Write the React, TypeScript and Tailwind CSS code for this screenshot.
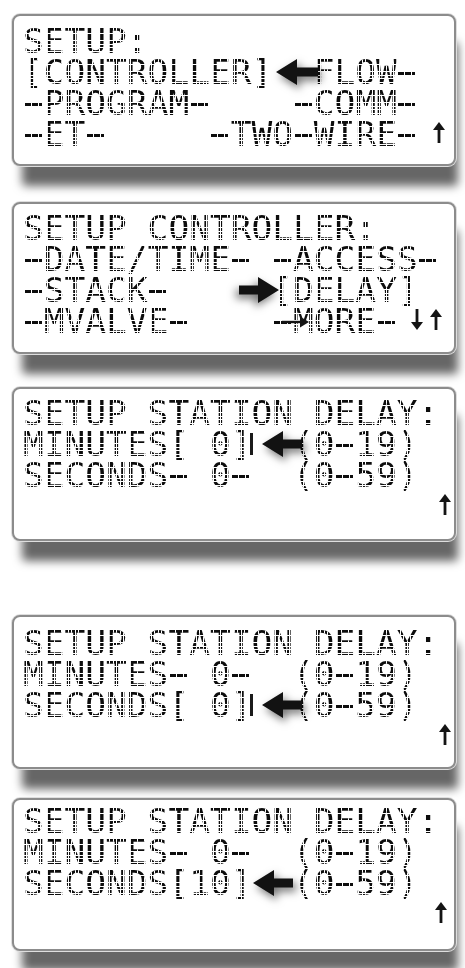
import React from "react";

type Tail = "up" | "down";

type Mark =
  | { kind: "left"; pos: string; w: number; cursor?: string }
  | { kind: "right"; pos: string; w: number }
  | { kind: "small"; pos: string };

type Line = { text: string; tail?: Tail[]; tailClass?: string; mark?: Mark };

type Screen = { box: string; lines: Line[] };

// LCD character look: dark glyphs broken up by a thin white dot grid
const dots =
  "whitespace-pre bg-[#0d0d0d] bg-[image:repeating-linear-gradient(90deg,#fff_0_0.7px,transparent_0.7px_3.458px),repeating-linear-gradient(180deg,#fff_0_0.7px,transparent_0.7px_3.56px)] bg-clip-text text-transparent";

// the panel's hyphen is a five-dot bar, wider than the font's dash
const dash =
  "bg-[image:repeating-linear-gradient(90deg,#0d0d0d_0_2.76px,#fff_2.76px_3.458px)] bg-no-repeat bg-[length:17.3px_3.2px] bg-[position:1.5px_19.5px]";

const screens: Screen[] = [
  {
    box: "mt-0 h-[152px] pt-[10px]",
    lines: [
      { text: "SETUP:" },
      { text: "[CONTROLLER] -FLOW-", mark: { kind: "left", pos: "left-[253px]", w: 42 } },
      { text: "-PROGRAM-    -COMM-" },
      { text: "-ET-     -TWO-WIRE-", tail: ["up"], tailClass: "ml-[15px]" },
    ],
  },
  {
    box: "mt-[36px] h-[152px] pt-[9px]",
    lines: [
      { text: "SETUP CONTROLLER:" },
      { text: "-DATE/TIME- -ACCESS-" },
      { text: "-STACK-     [DELAY]", mark: { kind: "right", pos: "left-[216px]", w: 40 } },
      {
        text: "-MVALVE-    -MORE-",
        tail: ["down", "up"],
        tailClass: "ml-[14px]",
        mark: { kind: "small", pos: "left-[259px]" },
      },
    ],
  },
  {
    box: "mt-[33px] h-[154px] pt-[9px]",
    lines: [
      { text: "SETUP STATION DELAY:" },
      {
        text: "MINUTES[ 0]  (0-19)",
        mark: { kind: "left", pos: "left-[239px]", w: 40, cursor: "left-[227px]" },
      },
      { text: "SECONDS- 0-  (0-59)" },
      { text: "", tail: ["up"], tailClass: "ml-auto -mr-[6px]" },
    ],
  },
  {
    box: "mt-[74px] h-[154px] pt-[11px]",
    lines: [
      { text: "SETUP STATION DELAY:" },
      { text: "MINUTES- 0-  (0-19)" },
      {
        text: "SECONDS[ 0]  (0-59)",
        mark: { kind: "left", pos: "left-[239px]", w: 40, cursor: "left-[227px]" },
      },
      { text: "", tail: ["up"], tailClass: "ml-auto -mr-[6px]" },
    ],
  },
  {
    box: "mt-[29px] h-[153px] pt-[6px]",
    lines: [
      { text: "SETUP STATION DELAY:" },
      { text: "MINUTES- 0-  (0-19)" },
      { text: "SECONDS[10]  (0-59)", mark: { kind: "left", pos: "left-[230px]", w: 40 } },
      { text: "", tail: ["up"], tailClass: "ml-auto -mr-[2px]" },
    ],
  },
];

function ScrollArrow({ dir }: { dir: Tail }) {
  return (
    <svg width="12" height="21" viewBox="0 0 12 21" className={dir === "down" ? "rotate-180" : ""}>
      <path d="M6 0 L12 8 L7.4 8 L7.4 21 L4.6 21 L4.6 8 L0 8 Z" fill="#141414" />
    </svg>
  );
}

function BigArrow({ w, flip }: { w: number; flip?: boolean }) {
  return (
    <svg
      width={w}
      height="28"
      viewBox={`0 0 ${w} 28`}
      className={`drop-shadow-[3px_4px_4px_rgba(0,0,0,0.55)] ${flip ? "-scale-x-100" : ""}`}
    >
      <path d={`M0 14 L21 1 L21 9.5 L${w} 9.5 L${w} 18.5 L21 18.5 L21 27 Z`} fill="#121212" />
    </svg>
  );
}

// pointer drawn on top of the characters it sits between
function Pointer({ mark }: { mark: Mark }) {
  if (mark.kind === "small") {
    return (
      <svg
        width="28"
        height="12"
        viewBox="0 0 28 12"
        className={`absolute top-[10px] ${mark.pos}`}
      >
        <rect x="0" y="4.8" width="20" height="2.4" fill="#141414" />
        <path d="M18 0.5 L27 6 L18 11.5 Z" fill="#141414" />
      </svg>
    );
  }
  return (
    <>
      {mark.kind === "left" && mark.cursor && (
        <span className={`absolute top-[4px] h-[22px] w-[3px] bg-[#1a1a1a] ${mark.cursor}`} />
      )}
      <div className={`absolute top-[1px] ${mark.pos}`}>
        <BigArrow w={mark.w} flip={mark.kind === "right"} />
      </div>
    </>
  );
}

function LcdText({ text }: { text: string }) {
  const parts = text.split(/(-)/);
  return (
    <span className={dots}>
      {parts.map((p, i) =>
        p === "-" ? (
          <span key={i} className={dash}>
            -
          </span>
        ) : (
          <React.Fragment key={i}>{p}</React.Fragment>
        ),
      )}
    </span>
  );
}

function LcdScreen({ screen }: { screen: Screen }) {
  return (
    <div
      className={`${screen.box} flex w-[444px] shrink-0 flex-col rounded-[8px] border-2 border-[#8c8c8c] bg-white px-[9px] shadow-[0_0_0_1px_#dedede,6px_24px_10px_-4px_rgba(0,0,0,0.6)]`}
    >
      {screen.lines.map((line, i) => (
        <div key={i} className="relative flex h-[31px] items-start text-[34.5px] leading-[31px]">
          {line.text && <LcdText text={line.text} />}
          {line.tail && (
            <div className={`flex gap-[7px] pt-[3px] ${line.tailClass}`}>
              {line.tail.map((t, j) => (
                <ScrollArrow key={j} dir={t} />
              ))}
            </div>
          )}
          {line.mark && <Pointer mark={line.mark} />}
        </div>
      ))}
    </div>
  );
}

export default function App() {
  return (
    <main className="flex min-h-screen w-full flex-col bg-white px-[12px] pt-[14px] pb-[20px] font-['DejaVu_Sans_Mono','Liberation_Mono',monospace]">
      {screens.map((s, i) => (
        <LcdScreen key={i} screen={s} />
      ))}
    </main>
  );
}
